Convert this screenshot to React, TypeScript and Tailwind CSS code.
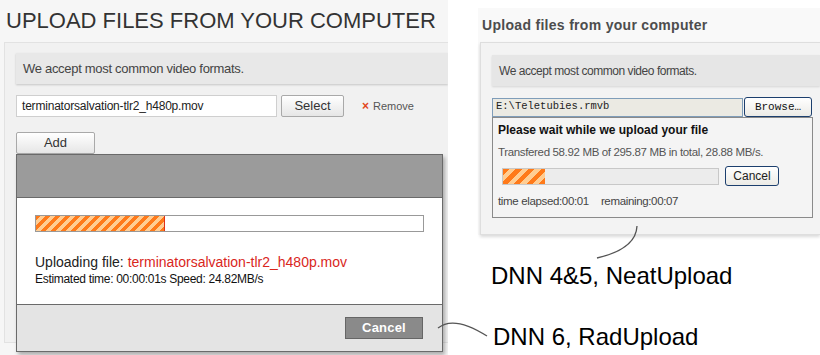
import React from 'react';

const sans = { fontFamily: '"Liberation Sans", Arial, sans-serif' };

function LeftUploader() {
  return (
    <div className="w-[448px] shrink-0 bg-[#f6f6f6] overflow-hidden">
      <h1 className="pt-[8px] pl-[6px] text-[22px] leading-[26px] text-[#333] whitespace-nowrap">
        UPLOAD FILES FROM YOUR COMPUTER
      </h1>

      <div className="mt-[8px] ml-[4px] h-[301px] border border-r-0 border-[#e2e2e2] bg-[#f1f1f1] pt-[10px] pl-[11px]">
        {/* info bar */}
        <div className="h-[31px] flex items-center pl-[7px] bg-[#e8e8e8] shadow-[0_1px_2px_rgba(0,0,0,0.18)] text-[13px] tracking-[-0.3px] text-[#444]">
          We accept most common video formats.
        </div>

        {/* file row */}
        <div className="mt-[11px] flex items-center">
          <div className="w-[261px] h-[22px] flex items-center pl-[5px] bg-white border border-[#cfcfcf] text-[12px] tracking-[-0.2px] text-[#222]">
            terminatorsalvation-tlr2_h480p.mov
          </div>
          <button className="ml-[4px] w-[63px] h-[22px] rounded-[2px] border border-[#a9a9a9] bg-gradient-to-b from-white to-[#e6e6e6] text-[13px] text-[#333]">
            Select
          </button>
          <span className="ml-[18px] flex items-center gap-[4px] text-[11px] text-[#555]">
            <span className="text-[#e2461c] font-bold text-[12px] leading-none">×</span>
            Remove
          </span>
        </div>

        <button className="mt-[15px] block w-[79px] h-[22px] rounded-[2px] border border-[#a9a9a9] bg-gradient-to-b from-white to-[#e6e6e6] text-[13px] text-[#333]">
          Add
        </button>

        {/* upload dialog */}
        <div className="w-[427px] h-[198px] flex flex-col border border-[#6a6a6a] shadow-[2px_3px_4px_rgba(0,0,0,0.3)]">
          <div className="h-[43px] bg-[#9b9b9b] border-b border-[#6a6a6a]" />
          <div className="h-[107px] bg-white border-b border-[#6a6a6a] pt-[17px] pl-[18px]">
            <div className="w-[389px] h-[17px] border border-[#999] bg-white">
              <div className="w-[129px] h-full border-r border-[#e0301a] bg-[repeating-linear-gradient(135deg,#ff7a1a_0_3.5px,#ffcd93_3.5px_7px)]" />
            </div>
            <div className="mt-[21px] text-[14px] leading-[18px] text-[#222] whitespace-nowrap">
              Uploading file: <span className="text-[#d9261c]">terminatorsalvation-tlr2_h480p.mov</span>
            </div>
            <div className="text-[12px] leading-[16px] tracking-[-0.3px] text-[#111] whitespace-nowrap">
              Estimated time: 00:00:01s Speed: 24.82MB/s
            </div>
          </div>
          <div className="flex-1 bg-[#e4e4e4] flex justify-end items-start pt-[12px] pr-[19px]">
            <button className="w-[78px] h-[22px] bg-[#8a8a8a] border border-[#666] text-white text-[13px] font-semibold tracking-[0.2px]">
              Cancel
            </button>
          </div>
        </div>
      </div>
    </div>
  );
}

function RightUploader() {
  return (
    <div className="flex-1 bg-white overflow-hidden">
      <div className="mt-[8px] ml-[30px] bg-[#f9f9f9] pt-[8px]">
        <div className="pl-[4px] text-[14px] leading-[18px] font-bold tracking-[0.3px] text-[#4d4d4d] whitespace-nowrap">
          Upload files from your computer
        </div>

        <div className="mt-[8px] ml-[2px] h-[193px] border border-r-0 border-[#dedede] bg-[#f3f3f3] shadow-[0_2px_3px_rgba(0,0,0,0.15)] pt-[12px] pl-[11px]">
          <div className="h-[31px] flex items-center pl-[7px] bg-[#e6e6e6] shadow-[0_1px_2px_rgba(0,0,0,0.12)] text-[12px] tracking-[-0.45px] text-[#444]">
            We accept most common video formats.
          </div>

          <div className="mt-[11px] flex items-center">
            <div
              className="w-[251px] h-[19px] flex items-center pl-[3px] bg-[#ebeae3] border border-[#7f9db9] text-[10.5px] text-[#222]"
              style={{ fontFamily: '"Liberation Mono", "Courier New", monospace' }}
            >
              E:\Teletubies.rmvb
            </div>
            <button
              className="ml-[1px] w-[68px] h-[20px] rounded-[3px] border border-[#1c3f6e] bg-gradient-to-b from-white to-[#ecebe6] text-[11px] text-[#111]"
              style={{ fontFamily: '"Liberation Mono", "Courier New", monospace' }}
            >
              Browse…
            </button>
          </div>

          <div className="w-[321px] h-[101px] border border-[#8a8a8a] bg-[#f4f4f4] px-[5px] pt-[4px]">
            <div className="text-[12px] leading-[17px] font-bold text-[#111] whitespace-nowrap">
              Please wait while we upload your file
            </div>
            <div className="mt-[5px] text-[11.5px] leading-[16px] tracking-[-0.35px] text-[#555] whitespace-nowrap">
              Transfered 58.92 MB of 295.87 MB in total, 28.88 MB/s.
            </div>
            <div className="mt-[6px] flex items-center">
              <div className="ml-[4px] w-[217px] h-[17px] border border-[#c8c8c8] bg-[#ececec]">
                <div className="w-[42px] h-full bg-[repeating-linear-gradient(135deg,#ff7a1a_0_4.5px,#ffcd93_4.5px_9px)]" />
              </div>
              <button className="ml-[6px] w-[54px] h-[20px] rounded-[3px] border border-[#1c3f6e] bg-gradient-to-b from-white to-[#ecebe6] text-[12px] text-[#222]">
                Cancel
              </button>
            </div>
            <div className="mt-[7px] text-[11.5px] leading-[16px] tracking-[-0.35px] text-[#444] whitespace-nowrap">
              time elapsed:00:01<span className="inline-block w-[12px]" />remaining:00:07
            </div>
          </div>
        </div>
      </div>

      <div className="mt-[27px] pl-[43px] text-[24px] leading-[28px] text-black whitespace-nowrap">
        DNN 4&amp;5, NeatUpload
      </div>
      <div className="mt-[33px] pl-[45px] text-[24px] leading-[28px] text-black whitespace-nowrap">
        DNN 6, RadUpload
      </div>
    </div>
  );
}

export default function App() {
  return (
    <div className="relative w-[820px] h-[355px] flex overflow-hidden bg-white" style={sans}>
      <LeftUploader />
      <RightUploader />
      {/* annotation curves */}
      <svg className="absolute inset-0 pointer-events-none" width="820" height="355" viewBox="0 0 820 355">
        <path d="M637 226 Q636 249 597 258" fill="none" stroke="#555" strokeWidth="1.3" />
        <path d="M438 328 Q454 315 487 336" fill="none" stroke="#555" strokeWidth="1.3" />
      </svg>
    </div>
  );
}
